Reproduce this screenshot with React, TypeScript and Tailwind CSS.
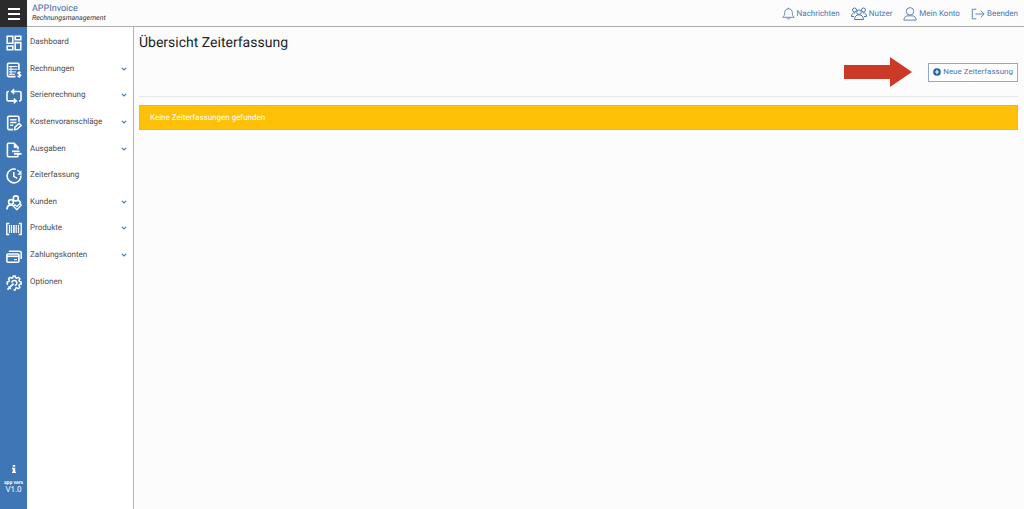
import React, { useState } from 'react';

type IconProps = { children: React.ReactNode; className?: string };

const RailIcon = ({ children }: IconProps) => (
  <svg
    viewBox="0 0 16 16"
    className="h-4 w-4"
    fill="none"
    stroke="currentColor"
    strokeWidth="1.6"
    strokeLinejoin="round"
    aria-hidden="true"
  >
    {children}
  </svg>
);

const TopIcon = ({ children, className }: IconProps) => (
  <svg
    viewBox="0 0 16 16"
    className={className ?? 'h-4 w-4'}
    fill="none"
    stroke="currentColor"
    strokeWidth="1"
    strokeLinejoin="round"
    aria-hidden="true"
  >
    {children}
  </svg>
);

const menu = [
  {
    label: 'Dashboard',
    hasChildren: false,
    icon: (
      <path strokeLinejoin="miter" d="M1.2 1.2h5.6v7.1H1.2zM9.2 1.2h5.6v3.6H9.2zM1.2 11h5.6v3.8H1.2zM9.2 7.6h5.6v7.2H9.2z" />
    ),
  },
  {
    label: 'Rechnungen',
    hasChildren: true,
    icon: (
      <>
        <path d="M9.5 14.6H2.7a1.2 1.2 0 0 1-1.2-1.2V2.4a1.2 1.2 0 0 1 1.2-1.2h9a1.2 1.2 0 0 1 1.2 1.2V8" />
        <path strokeWidth="1" d="M3 4.500h8.500M3 7.200h8.500M3 9.900h7M3 12.300h6M5 4v9" />
        <path strokeWidth="1.3" d="M14.700 10.600c-.4-.7-2.900-.8-2.900.5s3 .8 3 2.200-2.700 1.300-3.200.4M13.200 9.200v6.600" />
      </>
    ),
  },
  {
    label: 'Serienrechnung',
    hasChildren: true,
    icon: (
      <>
        <path d="M7 3.500h6.800A1.200 1.200 0 0 1 15 4.700v7a1.200 1.200 0 0 1-1.200 1.200H13M8.500 12.900H2.200A1.200 1.200 0 0 1 1 11.700V4.700a1.200 1.200 0 0 1 1.200-1.200H3" />
        <path fill="currentColor" strokeWidth="0.600" d="M8 .8v5.400L4.800 3.500zM8 10.200v5.400l3.200-2.700z" />
      </>
    ),
  },
  {
    label: 'Kostenvoranschläge',
    hasChildren: true,
    icon: (
      <>
        <path d="M7 14.600H3a1.300 1.300 0 0 1-1.300-1.300V2.600A1.300 1.300 0 0 1 3 1.300h8.700A1.300 1.300 0 0 1 13 2.600v4.200" />
        <path d="M4.200 4.700h6.300M4.200 7.500h6.300M4.200 10.300h3" />
        <path strokeWidth="1.500" d="m8.400 14.700.5-2.600 4.300-3.700 2 2.100-4.200 3.800z" />
      </>
    ),
  },
  {
    label: 'Ausgaben',
    hasChildren: true,
    icon: (
      <>
        <path d="M12 14.700H2.500a1.100 1.100 0 0 1-1.100-1.100V2.400a1.100 1.100 0 0 1 1.100-1.100h5.700L12 5.400v2.200" />
        <path fill="currentColor" strokeWidth="0.600" d="M8 1.500v4.200h4z" />
        <path strokeWidth="1.700" d="M6 9.300h7.500M8 11.800h7.600" />
        <path d="M12 12v2.700" />
      </>
    ),
  },
  {
    label: 'Zeiterfassung',
    hasChildren: false,
    icon: (
      <>
        <path d="M9.800 1.300A6.900 6.900 0 1 0 14.900 7.500" />
        <path d="M7.800 4v4.400l3.400 2" />
        <path d="M11.300 2a7 7 0 0 1 3 3.400M14.900 2.800v3.400h-3.200" strokeWidth="1.300" />
      </>
    ),
  },
  {
    label: 'Kunden',
    hasChildren: true,
    icon: (
      <>
        <circle cx="9.800" cy="3.400" r="2.500" />
        <circle cx="5" cy="7" r="2.400" />
        <path d="M.9 14.500c.2-3 1.700-4.600 4-4.600 1.300 0 2.300.5 3 1.400M12.200 5.200c1.400.7 2.300 1.800 2.600 3.300" />
        <path strokeWidth="1.300" d="m7.500 11.300 3.400 3.500 4.300-4.500-1.500-1.600-2.800 2.900-1.800-1.800z" />
      </>
    ),
  },
  {
    label: 'Produkte',
    hasChildren: true,
    icon: (
      <>
        <path strokeWidth="1.400" strokeLinejoin="miter" d="M3.300 2.500H.8v11h2.500M12.700 2.500h2.500v11h-2.500" />
        <path strokeWidth="1.200" d="M3.500 4v8M5.500 4v8M10.200 4v8M12.500 4v8" />
        <path strokeWidth="1.700" d="M7.900 4v8" />
      </>
    ),
  },
  {
    label: 'Zahlungskonten',
    hasChildren: true,
    icon: (
      <>
        <rect x=".9" y="6" width="12" height="8.200" rx="1" />
        <path d="M1 8.300h11.800" strokeWidth="1.600" />
        <path d="M2.800 3.300h11a1.400 1.400 0 0 1 1.400 1.400V11" />
        <path strokeWidth="1.200" d="M8 11.600h3" />
      </>
    ),
  },
  {
    label: 'Optionen',
    hasChildren: false,
    icon: (
      <>
        <path
          strokeWidth="1.500"
          d="M2 9.500 1.200 9V7l1.700-.5.5-1.100-.9-1.600 1.500-1.500 1.600.9 1.100-.5L7.200 1h2l.5 1.700 1.100.5 1.600-.9 1.500 1.500-.9 1.600.5 1.100 1.700.5v2l-1.700.5-.5 1.100.9 1.600-1.500 1.500-1.600-.9-1.100.5-.5 1.700H7.500"
        />
        <path strokeWidth="1.500" d="M5.700 7.600a2.600 2.600 0 1 1 3 3" />
        <path strokeWidth="1.800" d="m1.500 14.600 6-6" />
        <path strokeWidth="1.300" d="M2.500 11.500 5 14" />
      </>
    ),
  },
];

const topLinks = [
  {
    label: 'Nachrichten',
    icon: (
      <TopIcon className="h-[13px] w-[13px]">
        <path d="M8 2.200c-3 0-4.700 2-4.700 4.700 0 3-.8 4.300-2.400 5.800h14.200c-1.600-1.500-2.400-2.800-2.400-5.800 0-2.700-1.700-4.700-4.700-4.700zM8 .8v1.400M6 13c.2 2.600 3.800 2.600 4 0" />
      </TopIcon>
    ),
  },
  {
    label: 'Nutzer',
    icon: (
      <TopIcon>
        <circle cx="3.500" cy="4" r="2" />
        <circle cx="12.500" cy="4" r="2" />
        <circle cx="8" cy="6.200" r="2.300" />
        <path d="M3.500 13.500c.2-3 1.600-4.700 4.500-4.700s4.300 1.700 4.500 4.700zM.5 10.500c0-2.300 1-3.800 3.800-3.700M.5 10.500H3M15.500 10.500c0-2.300-1-3.800-3.800-3.700M15.500 10.500H13" />
      </TopIcon>
    ),
  },
  {
    label: 'Mein Konto',
    icon: (
      <TopIcon className="h-[14px] w-[14px]">
        <circle cx="8" cy="5" r="4.300" />
        <path d="M1 15c.2-3.300 1.800-4.700 4.600-4.900h4.800c2.800.2 4.400 1.600 4.600 4.900z" />
      </TopIcon>
    ),
  },
  {
    label: 'Beenden',
    icon: (
      <TopIcon className="h-[14px] w-[14px]">
        <path d="M6 2.500H1.500v11H6M5 8h10M11.200 4.200 15 8l-3.800 3.800" />
      </TopIcon>
    ),
  },
];

const Header = ({ onToggle }: { onToggle: () => void }) => (
  <header className="flex h-[27px] shrink-0 border-b border-[#adadad]">
    <button
      type="button"
      aria-label="Menü"
      onClick={onToggle}
      className="-mb-px flex w-[27px] shrink-0 flex-col items-center justify-center gap-[3px] bg-[#2b2b2b]"
    >
      <span className="h-0.5 w-3 bg-white" />
      <span className="h-0.5 w-3 bg-white" />
      <span className="h-0.5 w-3 bg-white" />
    </button>
    <a href="#" className="flex flex-col pl-[5px] pt-1">
      <span className="text-[9px] leading-[10px] text-[#3b6cb0]">APPInvoice</span>
      <span className="text-[7px] italic leading-2 text-[#333]">Rechnungsmanagement</span>
    </a>
    <nav className="ml-auto flex items-center gap-[11px] pr-1.5 pt-px">
      {topLinks.map((link) => (
        <a key={link.label} href="#" className="flex items-center gap-0.5 text-[8px] text-[#4a76b5]">
          {link.icon}
          {link.label}
        </a>
      ))}
    </nav>
  </header>
);

const Rail = () => (
  <aside className="flex w-[27px] shrink-0 flex-col items-center bg-[#3f76b5] text-white">
    <ul className="mt-[3px] grid h-[266px] grid-rows-10">
      {menu.map((item) => (
        <li key={item.label} className="flex items-center">
          <a href="#" aria-label={item.label}>
            <RailIcon>{item.icon}</RailIcon>
          </a>
        </li>
      ))}
    </ul>
    <div className="mt-auto flex flex-col items-center pb-[15px]">
      <svg viewBox="0 0 6 10" className="mb-2 h-2 w-1.5" fill="currentColor" aria-hidden="true">
        <path d="M1.500 0h3v2.300h-3zM.5 3.500h4V8.300h1V10h-5V8.300h1V5.200h-1z" />
      </svg>
      <span className="text-[5px] font-bold leading-[5px]">app vers</span>
      <span className="text-[8px] leading-2">V1.0</span>
    </div>
  </aside>
);

const Sidebar = () => (
  <nav className="w-[107px] shrink-0 border-r border-[#b5b5b5] bg-white">
    <ul className="mt-0.5 grid h-[266px] grid-rows-10">
      {menu.map((item) => (
        <li key={item.label}>
          <a href="#" className="flex h-full items-center justify-between pl-[3px] pr-1.5 text-[8px] text-[#4d4d4d]">
            {item.label}
            {item.hasChildren && (
              <svg
                viewBox="0 0 6 6"
                className="h-1.5 w-1.5"
                fill="none"
                stroke="#4a80bd"
                strokeWidth="1.200"
                aria-hidden="true"
              >
                <path d="m.8 1.800 2.200 2.200 2.200-2.200" />
              </svg>
            )}
          </a>
        </li>
      ))}
    </ul>
  </nav>
);

const App: React.FC = () => {
  const [menuOpen, setMenuOpen] = useState(true);

  return (
    <div className="flex min-h-screen flex-col bg-[#fcfcfc] font-['Roboto',sans-serif] [text-rendering:geometricPrecision]">
      <Header onToggle={() => setMenuOpen(!menuOpen)} />
      <div className="flex grow">
        <Rail />
        {menuOpen && <Sidebar />}
        <main className="min-w-0 grow pl-[5px] pr-1.5 pt-2">
          <h1 className="text-[14px] leading-4 text-[#212529]">Übersicht Zeiterfassung</h1>

          {/* Actions */}
          <div className="mt-1.5 flex items-center justify-end gap-4 border-b border-[#e8e8e8] pb-[9px]">
            <svg viewBox="0 0 68 30" className="h-[30px] w-[68px]" fill="#cb3927" aria-hidden="true">
              <path d="M0 8h46V0l22 15-22 15v-8H0z" />
            </svg>
            <button
              type="button"
              className="flex h-[19px] items-center gap-0.5 border border-[#91a9d0] bg-white px-1 text-[8px] text-[#4a76b5]"
            >
              <svg viewBox="0 0 8 8" className="h-2 w-2" aria-hidden="true">
                <circle cx="4" cy="4" r="3.800" fill="#1c5aa6" />
                <path d="M4 1.800v4.400M1.800 4h4.400" stroke="#fff" strokeWidth="1.200" />
              </svg>
              Neue Zeiterfassung
            </button>
          </div>

          {/* Empty state */}
          <div
            role="status"
            className="mt-2 flex h-[25px] items-center border border-[#f0b90d] bg-[#ffc107] px-2.5 text-[8px] text-white"
          >
            Keine Zeiterfassungen gefunden
          </div>
        </main>
      </div>
    </div>
  );
};

export default App;
